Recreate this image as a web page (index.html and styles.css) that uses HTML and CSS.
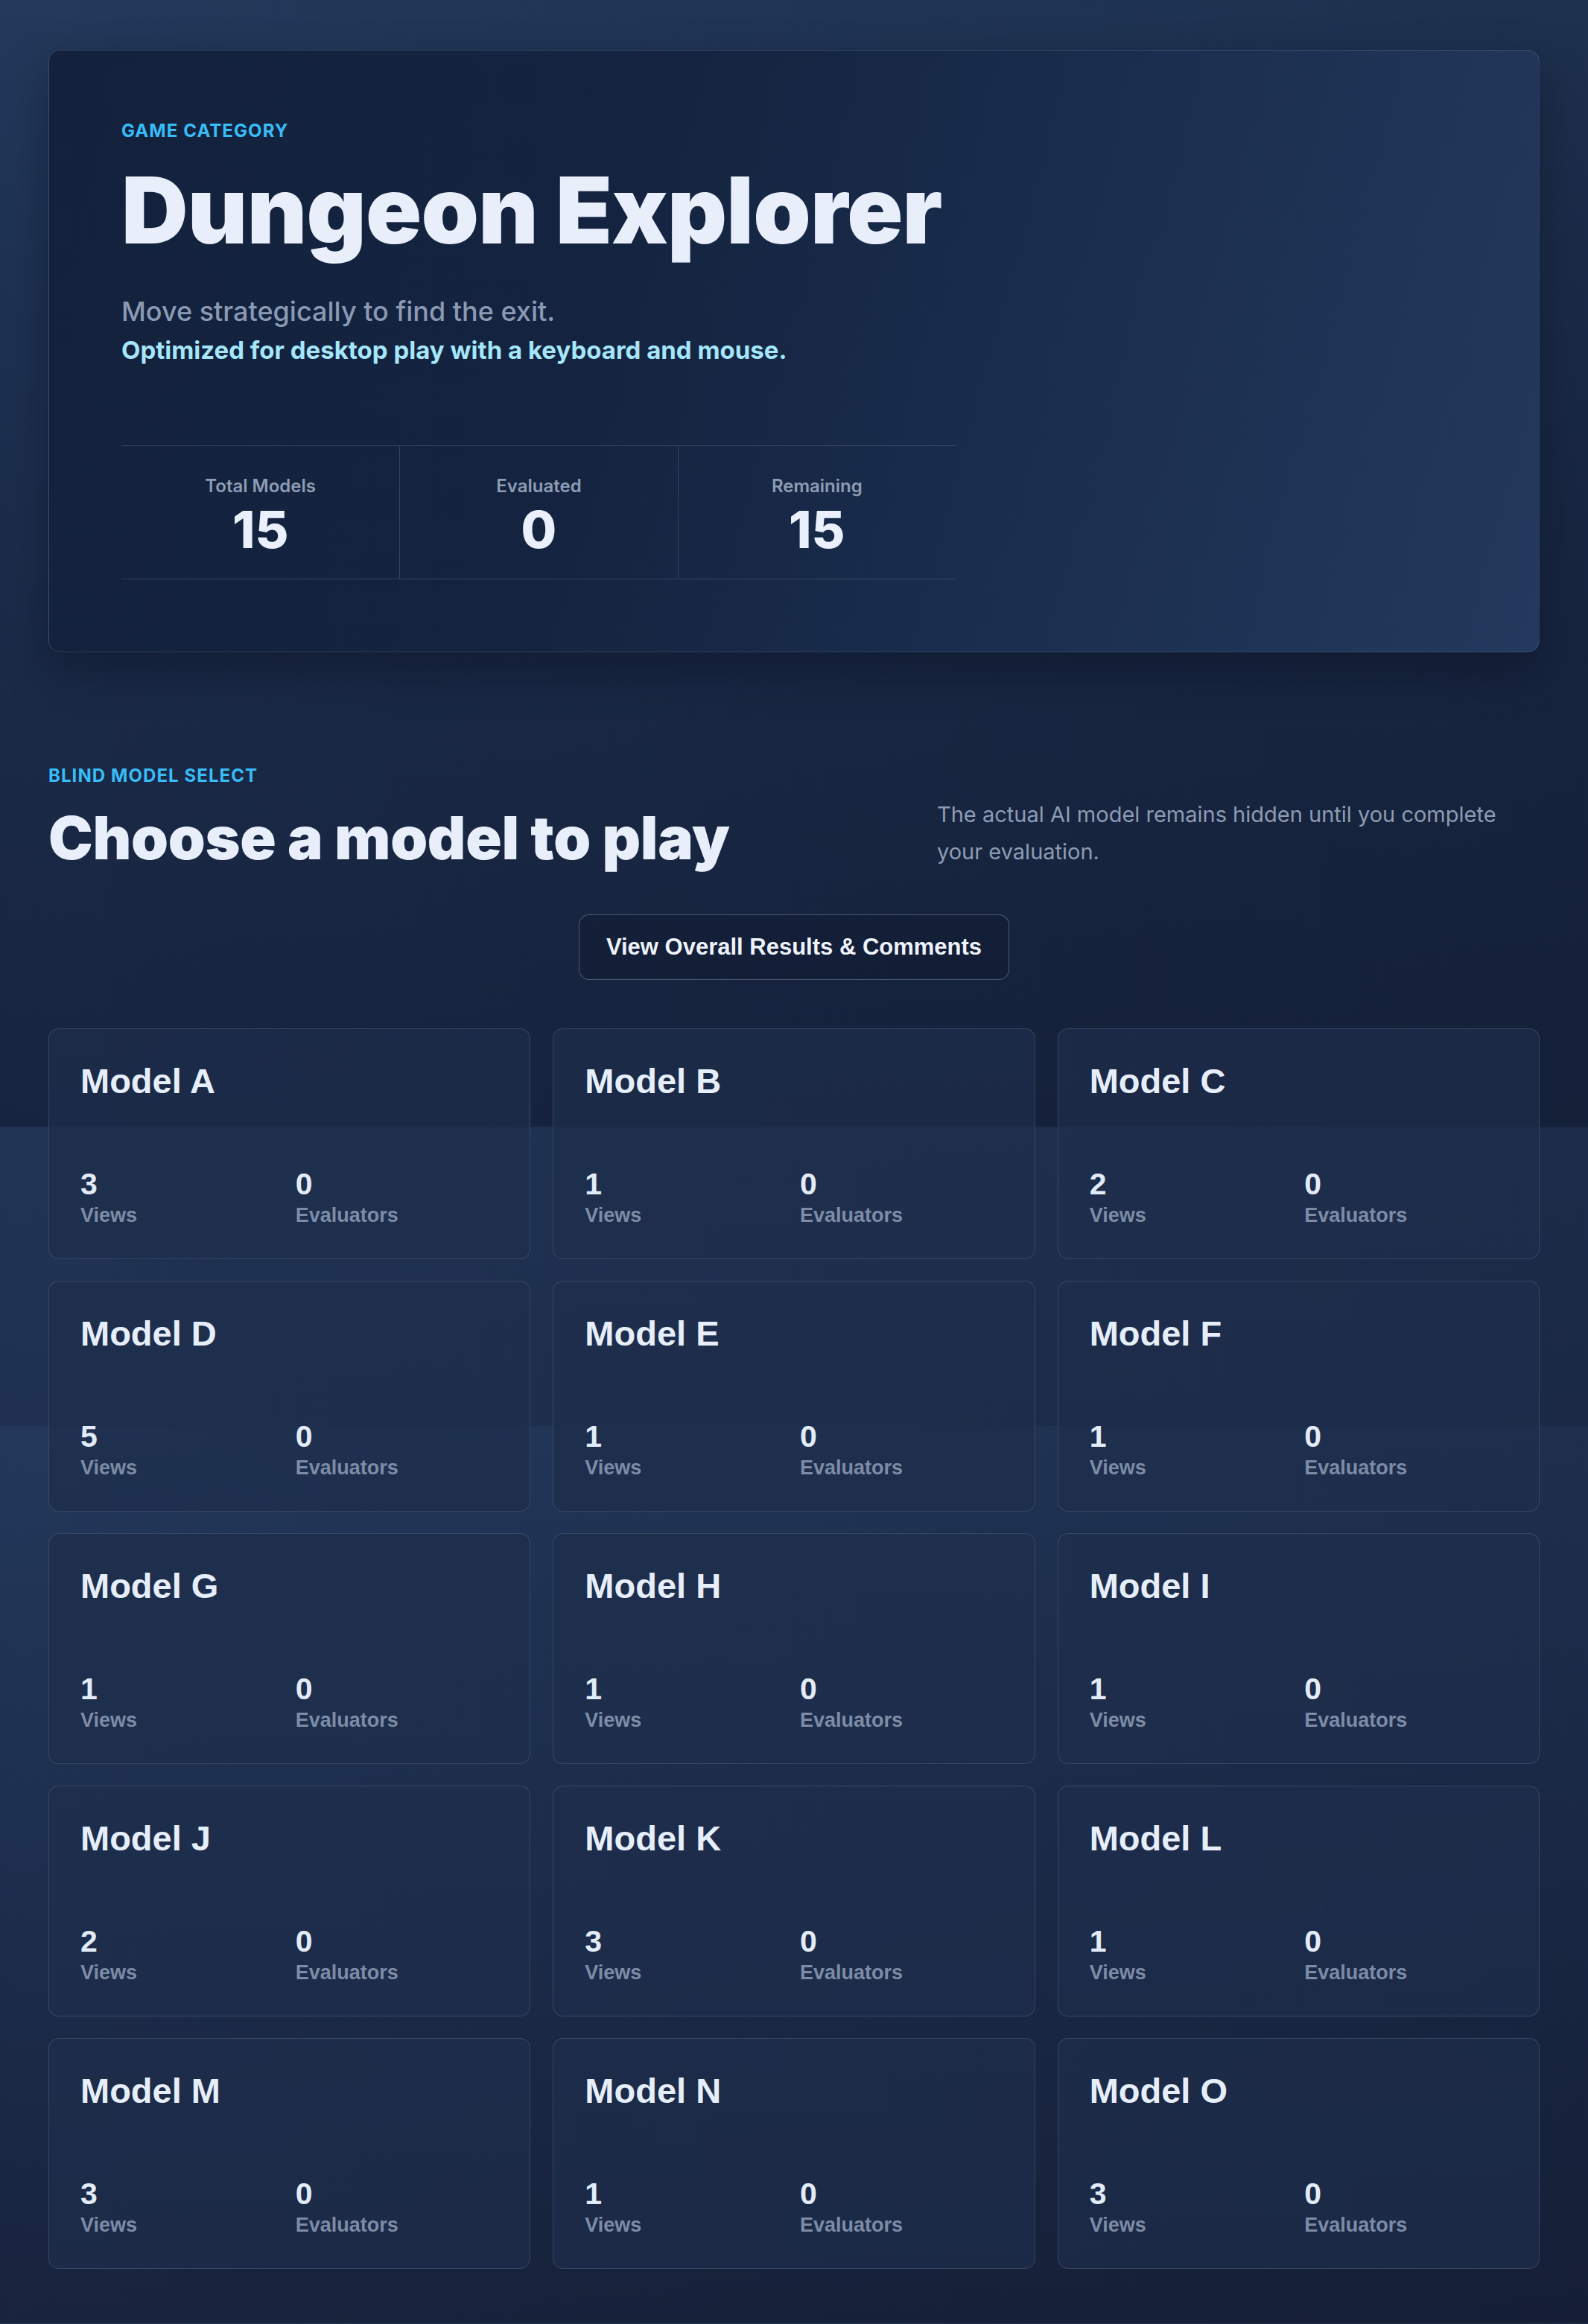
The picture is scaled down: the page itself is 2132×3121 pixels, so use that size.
FILE: index.html
```html
<!DOCTYPE html>
<html lang="en">
<head>
    <meta charset="UTF-8">
    <meta name="viewport" content="width=device-width, initial-scale=1.0">
    <title>Dungeon Explorer - Blind Model Select</title>
    <link rel="stylesheet" href="styles.css">
</head>
<body>
<main class="page">
    <!-- Game header -->
    <section class="hero">
        <div class="eyebrow">Game Category</div>
        <h1 class="hero-title">Dungeon Explorer</h1>
        <p class="hero-desc">Move strategically to find the exit.</p>
        <p class="hero-note">Optimized for desktop play with a keyboard and mouse.</p>

        <div class="hero-stats">
            <div class="hero-stat">
                <div class="hero-stat-label">Total Models</div>
                <div class="hero-stat-value">15</div>
            </div>
            <div class="hero-stat">
                <div class="hero-stat-label">Evaluated</div>
                <div class="hero-stat-value">0</div>
            </div>
            <div class="hero-stat">
                <div class="hero-stat-label">Remaining</div>
                <div class="hero-stat-value">15</div>
            </div>
        </div>
    </section>

    <!-- Model picker -->
    <section class="select">
        <div class="select-head">
            <div>
                <div class="eyebrow">Blind Model Select</div>
                <h2 class="select-title">Choose a model to play</h2>
            </div>
            <p class="select-desc">The actual AI model remains hidden until you complete your evaluation.</p>
        </div>

        <div class="select-actions">
            <button class="results-btn">View Overall Results &amp; Comments</button>
        </div>

        <div class="model-grid">
            <div class="model-card">
                <h3>Model A</h3>
                <div class="model-stats">
                    <div><div class="num">3</div><div class="lbl">Views</div></div>
                    <div><div class="num">0</div><div class="lbl">Evaluators</div></div>
                </div>
            </div>
            <div class="model-card">
                <h3>Model B</h3>
                <div class="model-stats">
                    <div><div class="num">1</div><div class="lbl">Views</div></div>
                    <div><div class="num">0</div><div class="lbl">Evaluators</div></div>
                </div>
            </div>
            <div class="model-card">
                <h3>Model C</h3>
                <div class="model-stats">
                    <div><div class="num">2</div><div class="lbl">Views</div></div>
                    <div><div class="num">0</div><div class="lbl">Evaluators</div></div>
                </div>
            </div>
            <div class="model-card">
                <h3>Model D</h3>
                <div class="model-stats">
                    <div><div class="num">5</div><div class="lbl">Views</div></div>
                    <div><div class="num">0</div><div class="lbl">Evaluators</div></div>
                </div>
            </div>
            <div class="model-card">
                <h3>Model E</h3>
                <div class="model-stats">
                    <div><div class="num">1</div><div class="lbl">Views</div></div>
                    <div><div class="num">0</div><div class="lbl">Evaluators</div></div>
                </div>
            </div>
            <div class="model-card">
                <h3>Model F</h3>
                <div class="model-stats">
                    <div><div class="num">1</div><div class="lbl">Views</div></div>
                    <div><div class="num">0</div><div class="lbl">Evaluators</div></div>
                </div>
            </div>
            <div class="model-card">
                <h3>Model G</h3>
                <div class="model-stats">
                    <div><div class="num">1</div><div class="lbl">Views</div></div>
                    <div><div class="num">0</div><div class="lbl">Evaluators</div></div>
                </div>
            </div>
            <div class="model-card">
                <h3>Model H</h3>
                <div class="model-stats">
                    <div><div class="num">1</div><div class="lbl">Views</div></div>
                    <div><div class="num">0</div><div class="lbl">Evaluators</div></div>
                </div>
            </div>
            <div class="model-card">
                <h3>Model I</h3>
                <div class="model-stats">
                    <div><div class="num">1</div><div class="lbl">Views</div></div>
                    <div><div class="num">0</div><div class="lbl">Evaluators</div></div>
                </div>
            </div>
            <div class="model-card">
                <h3>Model J</h3>
                <div class="model-stats">
                    <div><div class="num">2</div><div class="lbl">Views</div></div>
                    <div><div class="num">0</div><div class="lbl">Evaluators</div></div>
                </div>
            </div>
            <div class="model-card">
                <h3>Model K</h3>
                <div class="model-stats">
                    <div><div class="num">3</div><div class="lbl">Views</div></div>
                    <div><div class="num">0</div><div class="lbl">Evaluators</div></div>
                </div>
            </div>
            <div class="model-card">
                <h3>Model L</h3>
                <div class="model-stats">
                    <div><div class="num">1</div><div class="lbl">Views</div></div>
                    <div><div class="num">0</div><div class="lbl">Evaluators</div></div>
                </div>
            </div>
            <div class="model-card">
                <h3>Model M</h3>
                <div class="model-stats">
                    <div><div class="num">3</div><div class="lbl">Views</div></div>
                    <div><div class="num">0</div><div class="lbl">Evaluators</div></div>
                </div>
            </div>
            <div class="model-card">
                <h3>Model N</h3>
                <div class="model-stats">
                    <div><div class="num">1</div><div class="lbl">Views</div></div>
                    <div><div class="num">0</div><div class="lbl">Evaluators</div></div>
                </div>
            </div>
            <div class="model-card">
                <h3>Model O</h3>
                <div class="model-stats">
                    <div><div class="num">3</div><div class="lbl">Views</div></div>
                    <div><div class="num">0</div><div class="lbl">Evaluators</div></div>
                </div>
            </div>
        </div>
    </section>
</main>
</body>
</html>
```

FILE: styles.css
```css
html {
    background:
        linear-gradient(to right, rgba(8, 12, 24, 0) 0%, rgba(8, 12, 24, 0.2) 100%),
        linear-gradient(to bottom,
            #233a5c 0px, #1e3152 400px, #1a2a47 900px, #172440 1513px,
            #213456 1513px, #1f3050 1915px,
            #23385b 1915px, #1d2e4e 2500px, #18233d 3121px);
    background-color: #18233d;
}

body {
    margin: 0;
    font-family: Inter, "Noto Sans", sans-serif;
    color: #e6eefa;
}

.page {
    max-width: 2002px;
    margin: 0 auto;
    padding: 67px 0 73px;
}

.eyebrow {
    font-size: 24px;
    line-height: 26px;
    font-weight: 700;
    letter-spacing: 0.045em;
    text-transform: uppercase;
    color: #38bdf8;
}

/* Hero card */
.hero {
    padding: 95px 97px 97px;
    border: 1px solid rgba(148, 163, 184, 0.22);
    border-radius: 16px;
    background: linear-gradient(105deg, #13213c 0%, #142440 38%, #1b2e4f 68%, #23395d 100%);
    box-shadow: 0 24px 60px rgba(5, 10, 22, 0.35);
}

.hero-title {
    margin: 28px 0 0;
    font-size: 124px;
    line-height: 130px;
    font-weight: 900;
    letter-spacing: -0.006em;
    color: #e8effb;
}

.hero-desc {
    margin: 49px 0 0;
    font-size: 36px;
    line-height: 44px;
    font-weight: 500;
    color: #8a9ab4;
}

.hero-note {
    margin: 10px 0 0;
    font-size: 33px;
    line-height: 40px;
    font-weight: 700;
    color: #a5e6fa;
}

.hero-stats {
    display: grid;
    grid-template-columns: repeat(3, 1fr);
    max-width: 1120px;
    margin-top: 108px;
    border-top: 1px solid rgba(148, 163, 184, 0.25);
    border-bottom: 1px solid rgba(148, 163, 184, 0.25);
}

.hero-stat {
    padding: 41px 0 31px;
    text-align: center;
}

.hero-stat + .hero-stat { border-left: 1px solid rgba(148, 163, 184, 0.25); }

.hero-stat-label {
    font-size: 24px;
    line-height: 25px;
    font-weight: 600;
    color: #8e9cb4;
}

.hero-stat-value {
    margin-top: 11px;
    font-size: 69px;
    line-height: 70px;
    font-weight: 800;
    color: #eaf1fc;
}

/* Model select section */
.select { margin-top: 153px; }

.select-head {
    display: flex;
    justify-content: space-between;
    align-items: flex-end;
}

.select-title {
    margin: 26px 0 0;
    font-size: 80px;
    line-height: 88px;
    font-weight: 900;
    letter-spacing: -0.004em;
    color: #e8effb;
}

.select-desc {
    width: 809px;
    margin: 0;
    font-size: 29px;
    line-height: 50px;
    color: #8d9bb3;
}

.select-actions {
    display: flex;
    justify-content: center;
    margin-top: 59px;
}

.results-btn {
    padding: 23px 36px;
    font-family: "Liberation Sans", Arial, sans-serif;
    font-size: 31px;
    line-height: 40px;
    font-weight: 700;
    color: #eef3fb;
    background: rgba(15, 23, 42, 0.35);
    border: 1px solid rgba(148, 163, 184, 0.45);
    border-radius: 14px;
    cursor: pointer;
}

.model-grid {
    display: grid;
    grid-template-columns: repeat(3, 1fr);
    gap: 29px 30px;
    margin-top: 65px;
}

.model-card {
    display: flex;
    flex-direction: column;
    box-sizing: border-box;
    min-height: 310px;
    padding: 42px 42px 40px;
    background: rgba(30, 45, 75, 0.7);
    border: 1px solid rgba(148, 163, 184, 0.22);
    border-radius: 14px;
    font-family: "Liberation Sans", Arial, sans-serif;
}

.model-card h3 {
    margin: 0;
    font-size: 47px;
    line-height: 56px;
    font-weight: 700;
    color: #e6eefa;
}

.model-stats {
    display: grid;
    grid-template-columns: 1fr 1fr;
    gap: 16px;
    margin-top: auto;
}

.model-stats .num {
    font-size: 41px;
    line-height: 49px;
    font-weight: 700;
    color: #e2ebf8;
}

.model-stats .lbl {
    font-size: 27px;
    line-height: 35px;
    font-weight: 700;
    color: #7d8ca6;
}
```
